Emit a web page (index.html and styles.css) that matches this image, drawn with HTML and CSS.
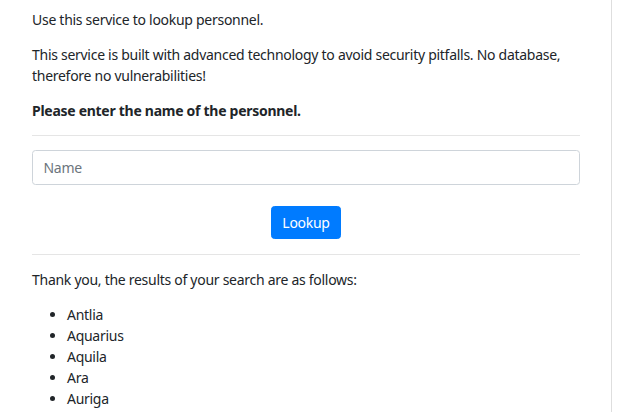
FILE: index.html
```html
<!DOCTYPE html>
<html lang="en">
<head>
<meta charset="utf-8">
<title>Personnel Lookup</title>
<link rel="stylesheet" href="styles.css">
</head>
<body>
<div class="page">
  <div class="container">
    <p>Use this service to lookup personnel.</p>
    <p>This service is built with advanced technology to avoid security pitfalls. No database, therefore no vulnerabilities!</p>
    <p class="strong">Please enter the name of the personnel.</p>
    <hr>
    <form class="lookup-form">
      <div class="form-group">
        <input class="form-control" type="text" name="name" placeholder="Name">
      </div>
      <div class="actions">
        <button class="btn btn-primary" type="submit">Lookup</button>
      </div>
    </form>
    <hr class="hr-results">
    <p>Thank you, the results of your search are as follows:</p>
    <ul class="results">
      <li>Antlia</li>
      <li>Aquarius</li>
      <li>Aquila</li>
      <li>Ara</li>
      <li>Auriga</li>
    </ul>
  </div>
</div>
</body>
</html>
```
FILE: styles.css
```css
html {
  font-size: 14px;
  overflow: hidden;
}
body {
  margin: 0;
  font-family: "Noto Sans", "Open Sans", sans-serif;
  font-size: 14px;
  line-height: 1.5;
  letter-spacing: -0.28px;
  color: #212529;
  background: #fff;
}
.page {
  box-sizing: border-box;
  width: 612px;
  height: 100vh;
  border-right: 1px solid #dedede;
  padding: 9px 31px 0 32px;
}
.container p {
  margin: 0 0 14px;
}
.strong {
  font-weight: 700;
}
hr {
  margin: 14px 0;
  border: 0;
  border-top: 1px solid rgba(0, 0, 0, 0.1);
  height: 0;
}
.hr-results {
  margin-top: 15px;
}
.form-group {
  margin-bottom: 21px;
}
.form-control {
  display: block;
  box-sizing: border-box;
  width: 100%;
  height: 34.5px;
  padding: 5.25px 10.5px;
  font-family: inherit;
  font-size: 14px;
  letter-spacing: -0.28px;
  line-height: 1.5;
  color: #495057;
  background: #fff;
  border: 1px solid #ced4da;
  border-radius: 3.5px;
}
.form-control::placeholder {
  color: #6c757d;
  opacity: 1;
}
.actions {
  text-align: center;
}
.btn {
  display: inline-block;
  font-family: inherit;
  font-size: 14px;
  letter-spacing: -0.28px;
  line-height: 1.5;
  padding: 5.25px 10.5px;
  border: 1px solid transparent;
  border-radius: 3.5px;
  cursor: pointer;
}
.btn-primary {
  color: #fff;
  background: #007bff;
  border-color: #007bff;
}
.results {
  margin: 0 0 14px;
  padding-left: 35px;
}
```
